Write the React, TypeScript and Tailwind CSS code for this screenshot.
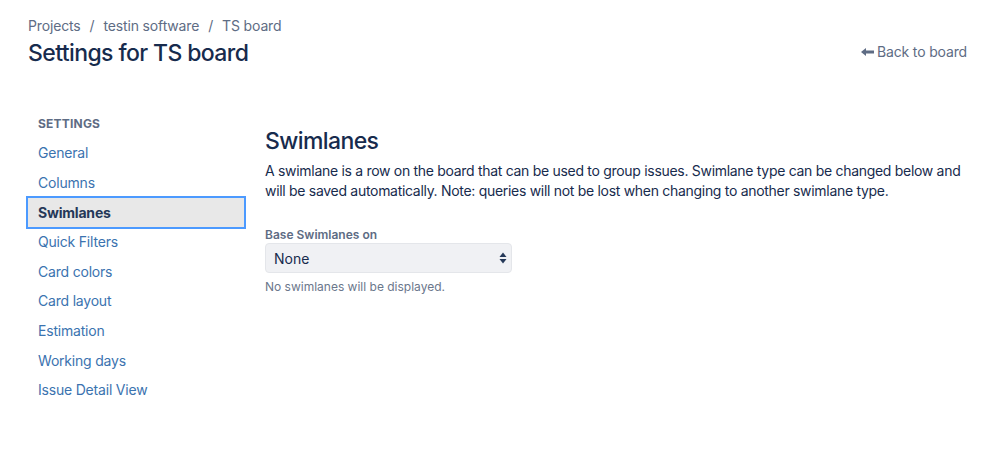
import React from 'react';

const navItems = [
  'General',
  'Columns',
  'Swimlanes',
  'Quick Filters',
  'Card colors',
  'Card layout',
  'Estimation',
  'Working days',
  'Issue Detail View',
];

function BackArrow() {
  return (
    <svg width="14" height="10" viewBox="0 0 14 10" className="mr-[2px]">
      <path d="M0 5 L5 1 L5 3.5 L13 3.5 L13 6.5 L5 6.5 L5 9 Z" fill="#5e6c84" />
    </svg>
  );
}

function SelectArrows() {
  return (
    <svg width="8" height="14" viewBox="0 0 8 14">
      <path d="M4 1.5 L7.5 6 L0.5 6 Z" fill="#253858" />
      <path d="M4 12.5 L7.5 8 L0.5 8 Z" fill="#253858" />
    </svg>
  );
}

export default function App() {
  const active = 'Swimlanes';
  return (
    <div className="w-[999px] h-[455px] bg-white text-[#172b4d] font-['Inter','Noto_Sans',sans-serif] overflow-hidden">
      {/* Header */}
      <header className="flex items-start justify-between pl-[28px] pr-[32px] pt-[16px]">
        <div>
          <nav className="flex items-center text-[14px] leading-[20px] text-[#5e6c84] tracking-[-0.15px]">
            <span>Projects</span>
            <span className="mx-[9px]">/</span>
            <span>testin software</span>
            <span className="mx-[9px]">/</span>
            <span>TS board</span>
          </nav>
          <h1 className="mt-[3px] text-[23px] leading-[28px] font-medium tracking-[-0.6px] text-[#172b4d]">
            Settings for TS board
          </h1>
        </div>
        <a className="mt-[26px] flex items-center text-[14px] leading-[20px] text-[#5e6c84] tracking-[-0.15px]">
          <BackArrow />
          Back to board
        </a>
      </header>

      {/* Body */}
      <div className="flex pt-[49px] pl-[26px]">
        <aside className="w-[220px] shrink-0">
          <div className="px-[12px] text-[12px] leading-[16px] font-bold text-[#5e6c84] tracking-[0.2px]">
            SETTINGS
          </div>
          <ul className="mt-[6.2px]">
            {navItems.map(item =>
              item === active ? (
                <li
                  key={item}
                  className="h-[33px] my-[-1.7px] flex items-center px-[10px] border-2 border-[#4c9aff] bg-[#e8e8e8] text-[14px] font-bold text-[#253858] tracking-[-0.2px]"
                >
                  {item}
                </li>
              ) : (
                <li
                  key={item}
                  className="h-[29.6px] flex items-center px-[12px] text-[14px] text-[#3b73af] tracking-[-0.2px]"
                >
                  {item}
                </li>
              )
            )}
          </ul>
        </aside>

        <main className="ml-[19px] flex-1 pr-[30px]">
          <h2 className="mt-[11px] text-[23px] leading-[28px] font-medium tracking-[-0.6px] text-[#172b4d]">
            Swimlanes
          </h2>
          <p className="mt-[6px] text-[14px] leading-[20px] text-[#172b4d] tracking-[-0.3px]">
            A swimlane is a row on the board that can be used to group issues. Swimlane type can be changed below and
            will be saved automatically. Note: queries will not be lost when changing to another swimlane type.
          </p>

          <label className="block mt-[26px] text-[12px] leading-[16px] font-semibold text-[#5e6c84]">
            Base Swimlanes on
          </label>
          <div className="w-[247px] h-[30px] rounded-[4px] bg-[#f0f1f4] border border-[#e4e6ea] flex items-center justify-between pl-[8px] pr-[4px]">
            <span className="text-[14px] text-[#172b4d]">None</span>
            <SelectArrows />
          </div>
          <div className="mt-[6px] text-[12px] leading-[16px] text-[#6b778c]">
            No swimlanes will be displayed.
          </div>
        </main>
      </div>
    </div>
  );
}
